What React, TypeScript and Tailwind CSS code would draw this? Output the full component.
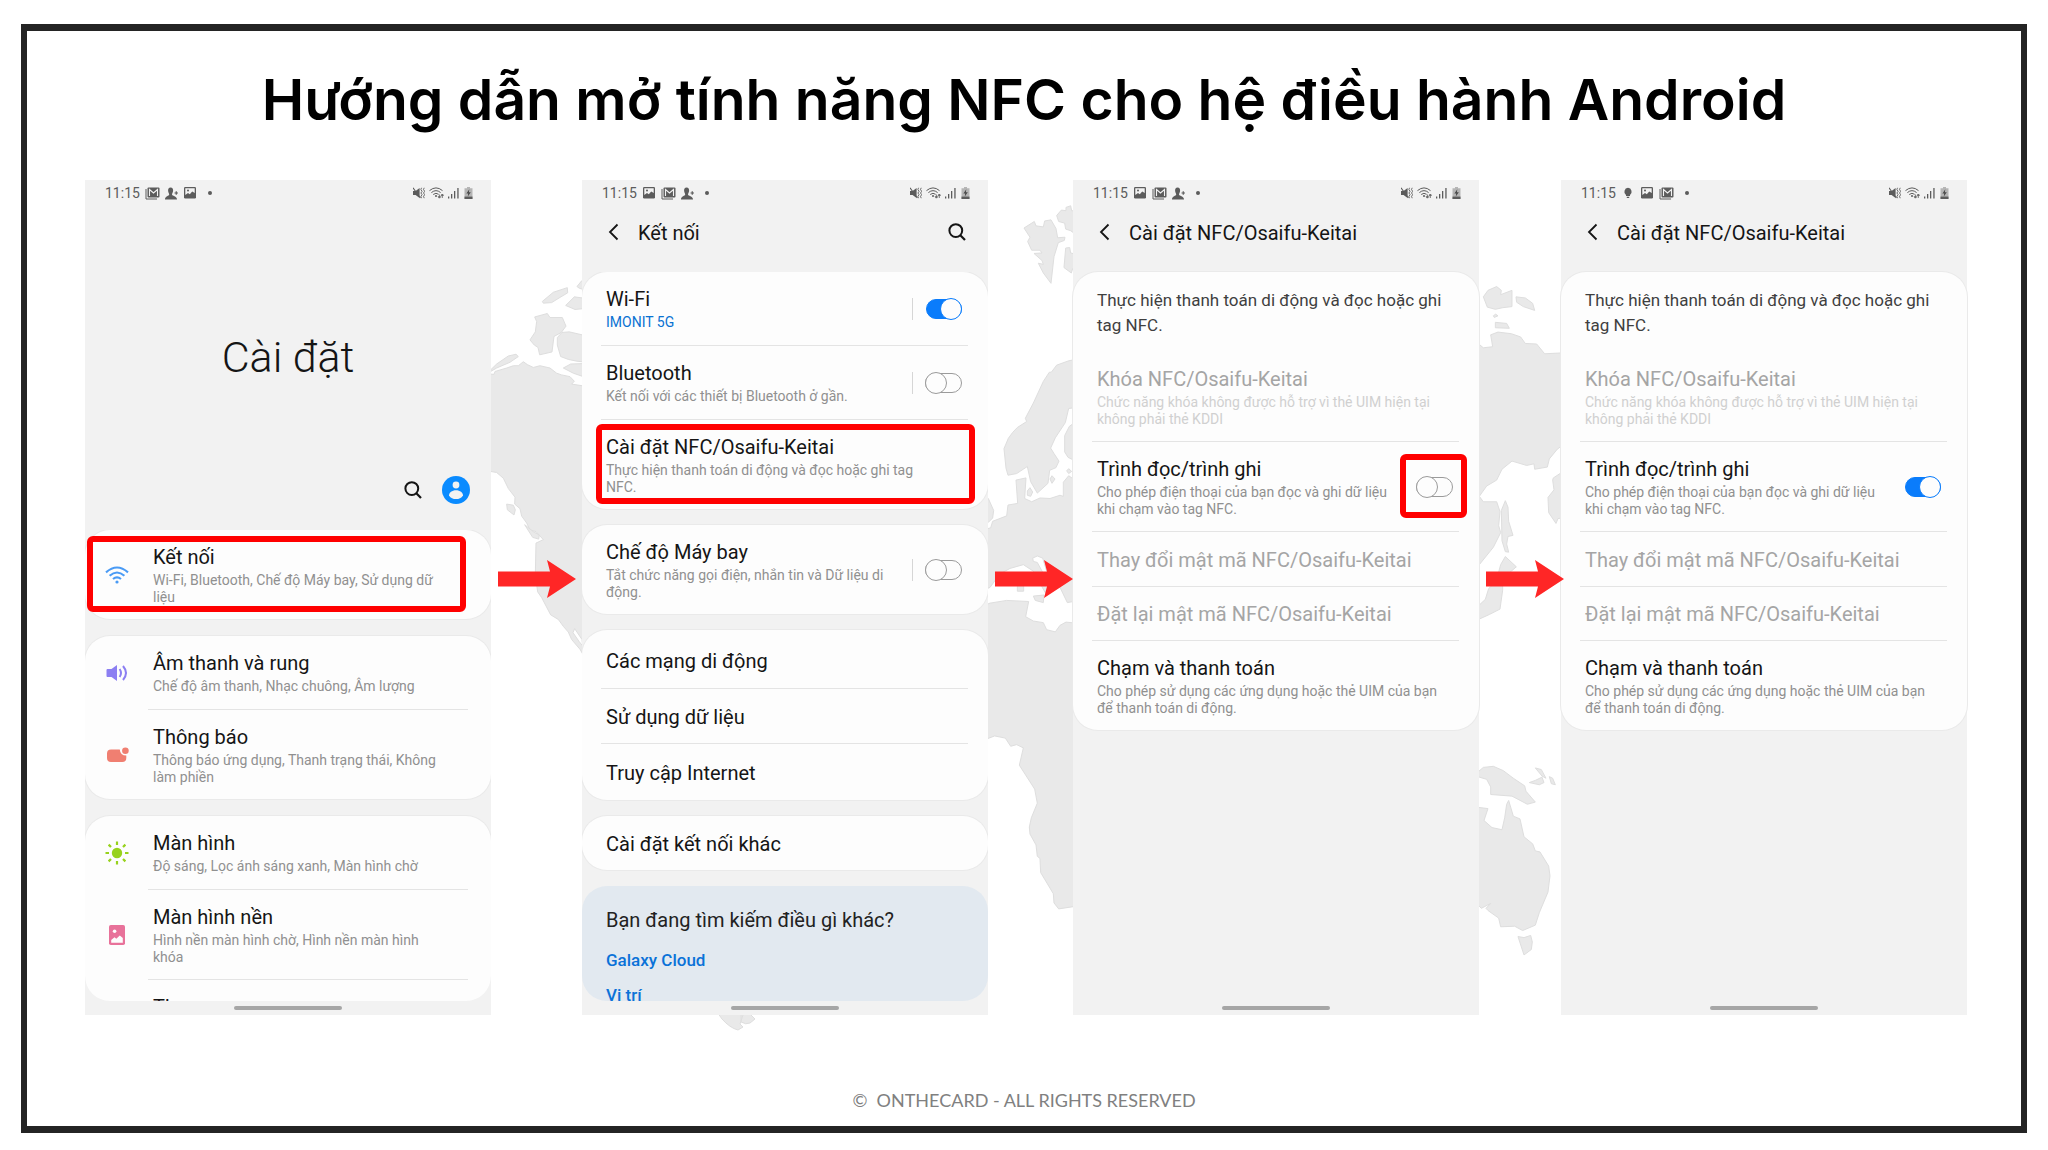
import type { ReactNode } from "react";

const LAND = "fill-[#e9e9e9] stroke-[#dedede]";

function WorldMap() {
  return (
    <svg
      aria-hidden="true"
      className="pointer-events-none absolute inset-0 h-full w-full"
      viewBox="0 0 2048 1150"
      preserveAspectRatio="xMidYMid meet"
    >
      <g className={LAND} transform="translate(480 170) scale(.3333 .574)">
        <path vectorEffect="non-scaling-stroke" d="M187 229 220 213 262 205 263 214 240 222 215 231 190 232ZM257 236 283 221 320 224V241L285 243ZM291 203 305 193 320 195V210L298 206ZM164 256 202 250 210 257 247 257 258 272 244 283 222 290 216 317 179 322 174 309 163 305 150 296 166 282 170 264ZM320 289 268 282 246 283 232 292 232 305 242 325 265 330 290 333 320 335ZM250 345 272 338 320 337V362L280 354Z" />
        <path vectorEffect="non-scaling-stroke" d="M20 355 42 356 45 351 80 345 100 341 115 341 130 334 142 339 160 344 180 341 210 345 230 354 245 357 270 360 283 368 275 373 320 377V855L300 835 275 818 265 805 250 795 235 783 212 775 185 745 173 735 166 705 168 650 190 644 168 630 150 627 140 615 125 603 120 590 104 582 105 570 85 555 70 537 50 527 20 524Z" />
        <path vectorEffect="non-scaling-stroke" d="M20 355 50 338 85 324 108 321 115 325 90 335 50 345ZM80 582 100 584 106 592 102 601 82 592ZM134 618 160 630 178 636 176 643 158 640Z" />
        <path className="fill-white" vectorEffect="non-scaling-stroke" d="M284 799 306 818 308 829 298 822 279 806Z" />
      </g>
      <g className={LAND} transform="translate(980 170) scale(.3333 .5421)">
        <path vectorEffect="non-scaling-stroke" d="M132 107 163 95 168 103 190 105 194 94 213 92 228 108 233 125 255 124 253 130 235 134 222 160 213 209 190 190 175 172 190 174 186 167 162 154 186 153 180 148 155 148 143 132 150 124ZM230 84 244 74 258 75 258 69 272 66 275 75 290 76V120L272 112 257 109 254 98 236 95ZM257 144 269 143 272 153 290 156V184L278 182 274 190 252 180Z" />
        <path vectorEffect="non-scaling-stroke" d="M290 349 266 352 230 360 214 373 208 373 190 390 160 430 136 458 140 464 112 475 98 484 85 495 72 514 78 550 84 563 110 560 142 547 152 575 172 596 204 578 209 554 228 549 237 537 222 523 212 513 226 494 256 466 266 440 290 438ZM290 463 268 473 254 490 254 520 264 530 290 538Z" />
        <path vectorEffect="non-scaling-stroke" d="M142 592 150 586 158 594 152 602 142 600ZM210 570 216 564 225 570 216 578ZM260 555 266 551 275 556 266 560Z" />
        <path vectorEffect="non-scaling-stroke" d="M10 600 25 606 41 628 38 642 25 650 10 652ZM10 664 32 660 38 648 80 638 84 618 113 615 108 572 138 568 134 606 155 612 180 605 210 606 240 600 250 602 250 576 266 564 290 574V795L262 798 240 770 200 740 188 716 172 712 158 716 160 722 172 724 195 750 205 768 196 780 160 740 130 728 90 735 60 745 30 770 10 775Z" />
        <path vectorEffect="non-scaling-stroke" d="M112 765H131V777H112ZM160 786 192 784 190 798 166 794ZM10 804 30 799 80 794 146 796 137 824 160 832 190 835 200 848 226 852 240 840 258 834 290 836V1358L236 1363 222 1352 220 1335 182 1296 180 1270 172 1266 168 1245 150 1225 148 1212 154 1195 172 1168 164 1142 118 1098 130 1066 110 1060 92 1063 76 1048 44 1044 10 1052Z" />
      </g>
      <g className={LAND} transform="translate(1470 170) scale(.3333 .5421)">
        <path vectorEffect="non-scaling-stroke" d="M40 234 54 222 80 215 94 222 92 230 126 222V252L98 254 76 257 52 253ZM138 234 166 236 188 246 194 259 160 252 140 244ZM70 269 77 266 84 269 73 272ZM76 281 110 283 118 292 76 291Z" />
        <path vectorEffect="non-scaling-stroke" d="M15 315 40 328 68 326 62 304 84 299 124 302 152 308 166 320 200 321 224 339 290 337V502L262 515 238 533 232 548 194 552 192 542 170 545 126 537 96 552 80 572 50 583 28 602 40 612 80 612 90 630 86 656 92 669 70 696 28 728 15 732Z" />
        <path vectorEffect="non-scaling-stroke" d="M290 552 250 568 248 572 252 590 234 604 236 632 258 652 264 643 290 641ZM94 628 106 610 114 622 116 648 129 674 114 676 110 690 116 705 106 704 96 684ZM92 728 106 713 139 732 124 740 98 752 98 775 90 810 58 820 15 832V810L46 792 56 772 78 760Z" />
        <path vectorEffect="non-scaling-stroke" d="M15 1115 40 1102 70 1100 100 1108 130 1122 164 1136 168 1146 196 1166 172 1170 126 1155 62 1152V1138L50 1124 28 1120ZM178 1130 196 1126 216 1120 222 1130 208 1134ZM196 1103 214 1106 228 1122 216 1118ZM238 1119 248 1122 256 1134 244 1132Z" />
        <path vectorEffect="non-scaling-stroke" d="M15 1175 54 1178 42 1200 66 1213 96 1217 104 1195 110 1170 116 1163 130 1192 150 1197 162 1230 188 1243 196 1256 210 1258 236 1284 240 1302 234 1332 208 1370 196 1393 158 1403 134 1395 92 1396 86 1380 54 1366 48 1362 62 1353 34 1362 15 1350ZM144 1414 162 1416 182 1412 187 1424 184 1438 162 1448Z" />
      </g>
      <path className={LAND} d="M712 1005 722 1019Q730 1028 738 1030L743 1027 740 1024 743 1015 740 1005ZM741 1005V1022Q746 1025 750 1023L755 1019 748 1012V1005Z" />
    </svg>
  );
}

/* ---------- Status bar glyphs ---------- */

function MailIcon() {
  return (
    <svg className="h-[13px] w-[15px]" viewBox="0 0 15 13" fill="none" aria-hidden="true">
      <path d="M1 2V12H12" stroke="#5c5c5c" strokeWidth="1" />
      <rect x="2.5" y="0.5" width="12" height="10" rx="1" fill="#5c5c5c" />
      <path d="M4.5 9V2.5L8.5 6 12.5 2.5V9" stroke="#f2f2f2" strokeWidth="1.1" />
    </svg>
  );
}

function PersonIcon() {
  return (
    <svg className="h-[13px] w-[13px]" viewBox="0 0 13 13" fill="#5c5c5c" aria-hidden="true">
      <path d="M5.600 .5C7.600 .5 8.200 2 8.100 3.800 8 5.500 7.200 6.200 7 7.600 7 9 12 9.400 12 12.500H0C0 9.400 4.200 9 4.200 7.600 4 6.200 3.200 5.500 3.100 3.800 3 2 3.600 .5 5.600 .5Z" />
      <path d="M9.500 6H13M11.250 4.200v3.600" stroke="#5c5c5c" strokeWidth="1.200" />
    </svg>
  );
}

function PictureIcon() {
  return (
    <svg className="mx-px h-[12px] w-[12px]" viewBox="0 0 12 12" aria-hidden="true">
      <rect width="12" height="11.5" rx="1.2" fill="#5c5c5c" />
      <path d="M1.3 1.3H10.7V6L8.2 4.6 5.8 7.2 4 6 1.3 8Z" fill="#f2f2f2" />
      <circle cx="4" cy="3.5" r="1" fill="#5c5c5c" />
    </svg>
  );
}

function BulbIcon() {
  return (
    <svg className="mx-px h-[12px] w-[12px]" viewBox="0 0 12 12" fill="#5c5c5c" aria-hidden="true">
      <path d="M6 .8a4 4 0 0 1 2 7.200V9H4V8A4 4 0 0 1 6 .8ZM4.8 9.8H7.2V11H4.8Z" />
    </svg>
  );
}

function SystemIcons() {
  return (
    <div className="flex items-center gap-1">
      <svg className="h-[12px] w-[12px]" viewBox="0 0 12 12" fill="none" stroke="#5c5c5c" aria-hidden="true">
        <path d="M0 4H2.6L6.6 1V11L2.6 8H0Z" fill="#5c5c5c" stroke="none" />
        <path d="M0 .8 7.400 11" strokeWidth="1.100" />
        <path d="M8.500 .8 7.900 2.600 9.100 4.300 7.900 6 9.100 7.700 7.900 9.300 8.500 11.200M11.200 .8 10.500 2.600 11.700 4.300 10.500 6 11.700 7.700 10.500 9.300 11.200 11.200" strokeWidth=".9" />
      </svg>
      <svg className="h-[12px] w-[15px]" viewBox="0 0 15 12" fill="none" stroke="#5c5c5c" aria-hidden="true">
        <path d="M.5 3.6Q7 -1.8 13.5 3.6M2.4 5.6Q7 1.7 11.6 5.6M4.2 7.5Q7 5.2 9.6 7.3" />
        <circle cx="7" cy="9" r="1" fill="#5c5c5c" stroke="none" />
        <path d="M10.4 7.5V11M9 9.7 10.4 11.2 11.8 9.7ZM13.3 11V7.2M12 8.4 13.3 7 14.6 8.4Z" strokeWidth=".8" />
      </svg>
      <svg className="h-[12px] w-[11px]" viewBox="0 0 11 12" fill="#5c5c5c" aria-hidden="true">
        <path d="M0 9.5H1.3V11.5H0ZM3 7H4.3V11.5H3ZM6 4H7.3V11.5H6ZM9.3 1H10.6V11.5H9.3Z" />
      </svg>
      <svg className="ml-px h-[12px] w-[9px]" viewBox="0 0 9 12" aria-hidden="true">
        <path d="M3 0H6V1.2H8.5V12H.5V1.2H3Z" fill="#b5b5b5" />
        <path d="M.5 9.6H8.5V12H.5Z" fill="#5c5c5c" />
        <path d="M5.3 2.2 2.4 6.4H4.2L3.8 9.4 6.8 5.3H4.9Z" fill="#4a4a4a" />
      </svg>
    </div>
  );
}

function StatusBar({ icons }: { icons: ReactNode }) {
  return (
    <div className="flex h-[26px] shrink-0 items-center pl-5 pr-[18px]">
      <span className="text-[14px] leading-[26px] text-[#5c5c5c]">11:15</span>
      <div className="ml-[5px] flex items-center gap-[5px]">{icons}</div>
      <span className="ml-[11px] size-[4px] rounded-full bg-[#5c5c5c]" />
      <div className="ml-auto">
        <SystemIcons />
      </div>
    </div>
  );
}

/* ---------- Shared parts ---------- */

function SearchButton() {
  return (
    <button type="button" aria-label="Tìm kiếm" className="size-[18px]">
      <svg viewBox="0 0 18 18" fill="none" stroke="#151515" strokeWidth="2" aria-hidden="true">
        <circle cx="7.8" cy="7.6" r="6.4" />
        <path d="M12.3 12.2 17 17" strokeWidth="2.2" />
      </svg>
    </button>
  );
}

function Phone({ icons, children }: { icons: ReactNode; children: ReactNode }) {
  return (
    <section className="flex h-[835px] min-w-0 flex-1 flex-col bg-[#f2f2f2]">
      <StatusBar icons={icons} />
      {children}
      <div className="flex h-[14px] shrink-0 items-center justify-center">
        <span className="h-[4px] w-[108px] rounded-full bg-[#a6a6a6]" />
      </div>
    </section>
  );
}

function Header({ title, search }: { title: string; search?: boolean }) {
  return (
    <header className="mb-[14px] flex h-[52px] shrink-0 items-center pl-[26px] pr-[22px]">
      <button type="button" aria-label="Quay lại" className="h-[18px] w-[12px]">
        <svg viewBox="0 0 12 18" fill="none" stroke="#151515" strokeWidth="1.8" aria-hidden="true">
          <path d="M9.5 1.5 2 9 9.5 16.5" />
        </svg>
      </button>
      <h2 className="ml-[18px] flex-1 pt-[2px] text-[20px] leading-[24px] text-[#151515]">{title}</h2>
      {search && <SearchButton />}
    </header>
  );
}

function Card({ children }: { children: ReactNode }) {
  return (
    <div className="relative shrink-0 rounded-[25px] bg-[#fdfdfd] shadow-[0_0_0_1px_#eaeaea]">{children}</div>
  );
}

function Highlight({ place }: { place: string }) {
  return <span className={`pointer-events-none absolute rounded-[6px] border-6 border-[#ff0000] ${place}`} />;
}

function Toggle({ id, on }: { id: string; on?: boolean }) {
  return (
    <input
      id={id}
      type="checkbox"
      role="switch"
      defaultChecked={on}
      className="relative block h-[22px] w-[37px] shrink-0 appearance-none before:absolute before:inset-x-0 before:inset-y-px before:rounded-full before:border before:border-[#9b9b9b] after:absolute after:left-0 after:top-0 after:size-[22px] after:rounded-full after:border after:border-[#9b9b9b] after:bg-[#fdfdfd] checked:before:left-px checked:before:border-[#0a7cfb] checked:before:bg-[#0a7cfb] checked:after:left-[15px] checked:after:border-[#0a7cfb]"
    />
  );
}

type RowProps = {
  title: string;
  sub?: string;
  subTone?: string;
  titleTone?: string;
  icon?: ReactNode;
  toggle?: { id: string; on?: boolean; divided?: boolean; marked?: boolean };
  last?: boolean;
  marked?: string;
  height?: string;
};

function Row({
  title,
  sub,
  subTone = "text-[#909090]",
  titleTone = "text-[#151515]",
  icon,
  toggle,
  last,
  marked,
  height = "min-h-[73px]",
}: RowProps) {
  const text = (
    <>
      <span className={`block text-[20px] leading-[24px] ${titleTone}`}>{title}</span>
      {sub && <span className={`mt-[3px] block whitespace-pre text-[14px] leading-[17px] ${subTone}`}>{sub}</span>}
    </>
  );
  const pad = sub ? "pt-[15px] pb-[13px]" : "flex flex-col justify-center pt-px";
  return (
    <div className="relative flex">
      {icon && <span className="flex w-[63px] shrink-0 items-center justify-center">{icon}</span>}
      <div
        className={`flex flex-1 ${icon ? "mr-[23px]" : "ml-[19px] mr-5"} ${last ? "" : "border-b border-[#e4e4e4]"}`}
      >
        {toggle ? (
          <label htmlFor={toggle.id} className={`flex-1 pl-[5px] text-left ${height} ${pad}`}>
            {text}
          </label>
        ) : (
          <button type="button" className={`block flex-1 pl-[5px] text-left ${height}`}>
            <span className={`block ${height} ${pad}`}>{text}</span>
          </button>
        )}
        {toggle && (
          <div className="flex items-center pr-[6px]">
            {toggle.divided && <span className="mr-3 h-[22px] w-px bg-[#d6d6d6]" />}
            <div className="relative">
              <Toggle id={toggle.id} on={toggle.on} />
              {toggle.marked && <Highlight place="-left-4 -right-[14px] -top-[22px] -bottom-[20px]" />}
            </div>
          </div>
        )}
      </div>
      {marked && <Highlight place={marked} />}
    </div>
  );
}

function Arrow({ width }: { width: string }) {
  return (
    <div className={`relative z-10 shrink-0 pl-[6px] pt-[380px] ${width}`}>
      <svg className="h-[38px] w-[79px] overflow-visible" viewBox="0 0 79 38" fill="#ff2626" aria-hidden="true">
        <path d="M1 11.500H53L50 0 79 19 50 38 53 26.500H1Z" />
      </svg>
    </div>
  );
}

/* ---------- Row icons ---------- */

function WifiGlyph() {
  return (
    <svg className="h-[18px] w-[24px]" viewBox="0 0 24 18" fill="none" stroke="#4a9bf5" strokeWidth="2.1" aria-hidden="true">
      <path d="M1 6.4Q12 -3.4 23 6.4M4.6 9.8Q12 3.2 19.4 9.8M8 13Q12 9.6 16 13" />
      <circle cx="12" cy="16" r="1.6" fill="#4a9bf5" stroke="none" />
    </svg>
  );
}

function SoundGlyph() {
  return (
    <svg className="h-[18px] w-[22px]" viewBox="0 0 22 18" fill="none" stroke="#8c7ff2" aria-hidden="true">
      <path d="M1.5 5H5.5L11 1V17L5.5 13H1.5Q.5 13 .5 12V6Q.5 5 1.5 5Z" fill="#8c7ff2" stroke="none" />
      <path d="M13.6 5Q16.4 9 13.6 13" strokeWidth="2" />
      <path d="M17 2Q23 9 17 16" strokeWidth="2" />
    </svg>
  );
}

function NotifyGlyph() {
  return (
    <svg className="ml-[2px] h-[16px] w-[22px]" viewBox="0 0 22 16" fill="#f07f71" aria-hidden="true">
      <path d="M4 2.5H12.8Q13.2 8.5 19.3 8.6V11Q19.3 15 15.3 15H4Q0 15 0 11V6.5Q0 2.5 4 2.5Z" />
      <circle cx="18.4" cy="3.8" r="3.3" />
    </svg>
  );
}

function SunGlyph() {
  return (
    <svg className="size-[24px]" viewBox="0 0 24 24" fill="#97d21c" stroke="#97d21c" strokeWidth="2.2" aria-hidden="true">
      <circle cx="12" cy="12" r="5.2" stroke="none" />
      <path d="M12 .5V4M12 20V23.5M.5 12H4M20 12H23.5M3.6 3.6 6 6M18 18 20.4 20.4M3.6 20.4 6 18M18 6 20.4 3.6" />
    </svg>
  );
}

function WallpaperGlyph() {
  return (
    <svg className="h-[20px] w-[16px]" viewBox="0 0 16 20" aria-hidden="true">
      <rect width="16" height="20" rx="1.8" fill="#e8729a" />
      <circle cx="5.6" cy="6.2" r="1.8" fill="#fdfdfd" />
      <path d="M2.2 17.8V15L5.5 12.3 7.3 13.8 10.8 10.4 13.8 13V17.8Z" fill="#fdfdfd" />
    </svg>
  );
}

/* ---------- Screens ---------- */

function SettingsScreen() {
  return (
    <Phone icons={<><MailIcon /><PersonIcon /><PictureIcon /></>}>
      <header className="shrink-0 pb-[26px] pt-[126px]">
        <h2 className="text-center text-[43px] font-light leading-[50px] text-[#151515]">Cài đặt</h2>
        <div className="mt-[94px] flex items-center justify-end gap-5 pr-[21px]">
          <SearchButton />
          <button type="button" aria-label="Tài khoản" className="size-[28px]">
            <svg viewBox="0 0 28 28" aria-hidden="true">
              <circle cx="14" cy="14" r="14" fill="#0a8bff" />
              <circle cx="14" cy="9" r="3.4" fill="#f2f2f2" />
              <path d="M14 14.2C18 14.2 21 16.6 21 19.4 19.4 22 17 23 14 23S8.600 22 7 19.400C7 16.600 10 14.200 14 14.200Z" fill="#f2f2f2" />
            </svg>
          </button>
        </div>
      </header>
      <div className="flex min-h-0 flex-1 flex-col gap-[17px] overflow-hidden rounded-b-[25px]">
        <Card>
          <Row
            icon={<WifiGlyph />}
            title="Kết nối"
            sub={"Wi-Fi, Bluetooth, Chế độ Máy bay, Sử dụng dữ\nliệu"}
            last
            marked="left-[2px] right-[25px] top-[6px] bottom-[7px]"
          />
        </Card>
        <Card>
          <Row icon={<SoundGlyph />} title="Âm thanh và rung" sub="Chế độ âm thanh, Nhạc chuông, Âm lượng" />
          <Row
            icon={<NotifyGlyph />}
            title="Thông báo"
            sub={"Thông báo ứng dụng, Thanh trạng thái, Không\nlàm phiền"}
            last
          />
        </Card>
        <Card>
          <Row icon={<SunGlyph />} title="Màn hình" sub="Độ sáng, Lọc ánh sáng xanh, Màn hình chờ" />
          <Row
            icon={<WallpaperGlyph />}
            title="Màn hình nền"
            sub={"Hình nền màn hình chờ, Hình nền màn hình\nkhóa"}
          />
          <Row icon={<span />} title="Theme" sub=" " last />
        </Card>
      </div>
    </Phone>
  );
}

function ConnectionsScreen() {
  return (
    <Phone icons={<><PictureIcon /><MailIcon /><PersonIcon /></>}>
      <Header title="Kết nối" search />
      <div className="flex min-h-0 flex-1 flex-col gap-4 overflow-hidden rounded-b-[25px]">
        <Card>
          <Row title="Wi-Fi" sub="IMONIT 5G" subTone="text-[#0a72d2]" toggle={{ id: "wifi", on: true, divided: true }} />
          <Row title="Bluetooth" sub="Kết nối với các thiết bị Bluetooth ở gần." toggle={{ id: "bluetooth", divided: true }} />
          <Row
            title="Cài đặt NFC/Osaifu-Keitai"
            sub={"Thực hiện thanh toán di động và đọc hoặc ghi tag\nNFC."}
            last
            marked="left-[14px] right-[13px] top-[4px] bottom-[5px]"
          />
        </Card>
        <Card>
          <Row
            title="Chế độ Máy bay"
            sub={"Tắt chức năng gọi điện, nhắn tin và Dữ liệu di\nđộng."}
            toggle={{ id: "airplane", divided: true }}
            last
          />
        </Card>
        <Card>
          <div className="pt-[2px]">
            <Row title="Các mạng di động" height="h-[56px]" />
            <Row title="Sử dụng dữ liệu" height="h-[54px]" />
            <Row title="Truy cập Internet" height="h-[56px]" last />
          </div>
        </Card>
        <Card>
          <Row title="Cài đặt kết nối khác" height="h-[54px]" last />
        </Card>
        <div className="flex shrink-0 flex-col items-start rounded-[25px] bg-[#e2e9f0] px-6 pb-6 pt-[22px]">
          <h3 className="text-[20px] leading-[24px] text-[#222222]">Bạn đang tìm kiếm điều gì khác?</h3>
          <a href="#galaxy-cloud" className="mt-4 text-[17px] font-medium leading-[24px] text-[#0a72d8]">
            Galaxy Cloud
          </a>
          <a href="#location" className="mt-[11px] text-[17px] font-medium leading-[24px] text-[#0a72d8]">
            Vị trí
          </a>
        </div>
      </div>
    </Phone>
  );
}

function NfcScreen({ icons, id, on, marked }: { icons: ReactNode; id: string; on?: boolean; marked?: boolean }) {
  return (
    <Phone icons={icons}>
      <Header title="Cài đặt NFC/Osaifu-Keitai" />
      <div className="min-h-0 flex-1">
        <Card>
          <p className="whitespace-pre px-6 pb-[14px] pt-4 text-[17px] leading-[25px] text-[#3f3f3f]">
            {"Thực hiện thanh toán di động và đọc hoặc ghi\ntag NFC."}
          </p>
          <Row
            title="Khóa NFC/Osaifu-Keitai"
            sub={"Chức năng khóa không được hỗ trợ vì thẻ UIM hiện tại\nkhông phải thẻ KDDI"}
            titleTone="text-[#a5a5a5]"
            subTone="text-[#d0d0d0]"
          />
          <Row
            title="Trình đọc/trình ghi"
            sub={"Cho phép điện thoại của bạn đọc và ghi dữ liệu\nkhi chạm vào tag NFC."}
            toggle={{ id, on, marked }}
          />
          <Row title="Thay đổi mật mã NFC/Osaifu-Keitai" titleTone="text-[#a5a5a5]" height="h-[54px]" />
          <Row title="Đặt lại mật mã NFC/Osaifu-Keitai" titleTone="text-[#a5a5a5]" height="h-[53px]" />
          <Row
            title="Chạm và thanh toán"
            sub={"Cho phép sử dụng các ứng dụng hoặc thẻ UIM của bạn\nđể thanh toán di động."}
            last
          />
        </Card>
      </div>
    </Phone>
  );
}

export default function App() {
  return (
    <div className="relative flex min-h-screen flex-col bg-white px-[21px] pb-[17px] pt-6 font-['Roboto',sans-serif]">
      <WorldMap />
      <main className="relative flex flex-1 flex-col border-x-6 border-y-7 border-[#242424]">
        <h1 className="mt-[34px] text-center font-['Inter',sans-serif] text-[57px] font-semibold leading-[70px] text-black">
          Hướng dẫn mở tính năng NFC cho hệ điều hành Android
        </h1>
        <div className="mt-[45px] flex items-start pl-[58px] pr-[54px]">
          <SettingsScreen />
          <Arrow width="w-[91px]" />
          <ConnectionsScreen />
          <Arrow width="w-[85px]" />
          <NfcScreen id="reader-off" marked icons={<><PictureIcon /><MailIcon /><PersonIcon /></>} />
          <Arrow width="w-[82px]" />
          <NfcScreen id="reader-on" on icons={<><BulbIcon /><PictureIcon /><MailIcon /></>} />
        </div>
        <footer className="mt-[72px] whitespace-pre text-center font-['Lato',sans-serif] text-[18px] leading-[26px] text-[#808080]">
          ©  ONTHECARD - ALL RIGHTS RESERVED
        </footer>
      </main>
    </div>
  );
}
